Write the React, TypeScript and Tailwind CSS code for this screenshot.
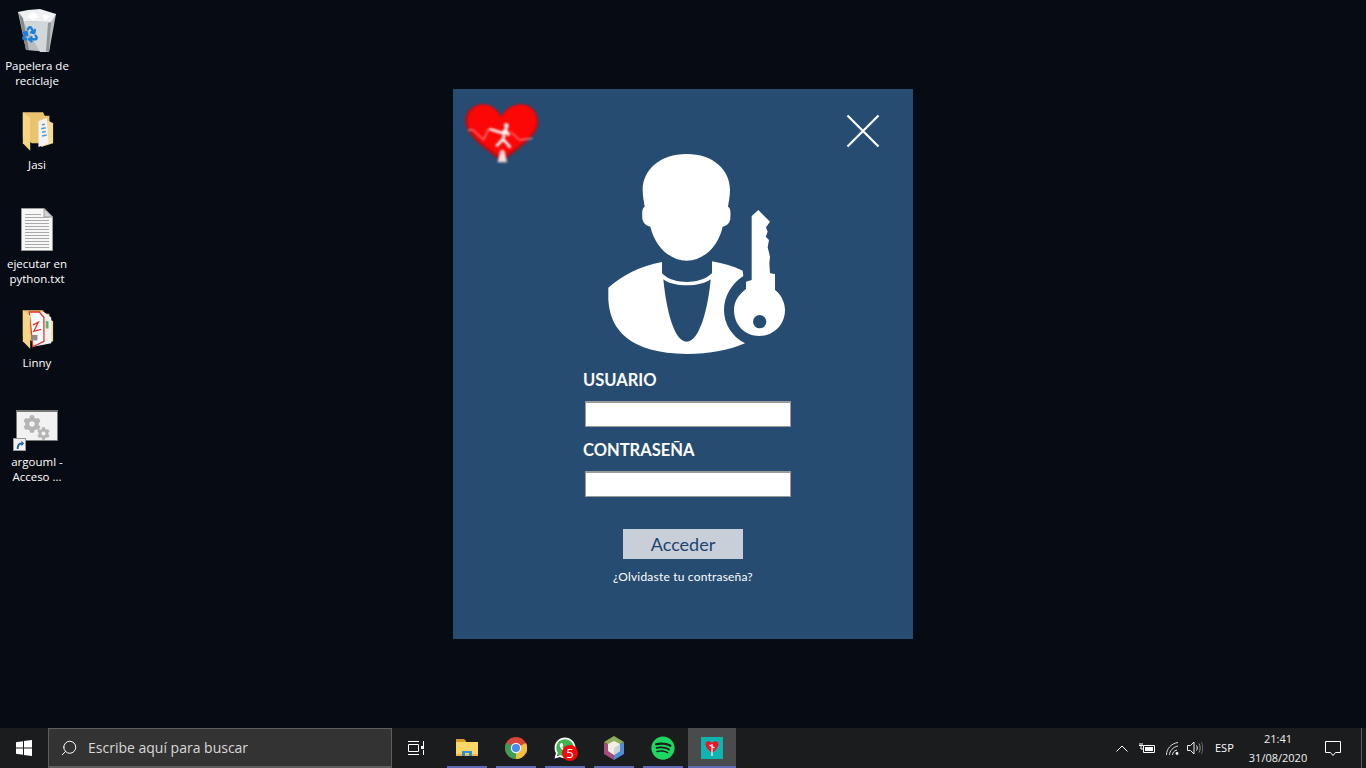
import { FaCog, FaSpotify, FaWhatsapp } from "react-icons/fa"
import { Recycle, Search } from "lucide-react"

const Bin = () => (
  <div className="relative w-[38px] h-[44px]">
    <svg width="38" height="44" viewBox="0 0 38 44">
      <path d="M0 3 L38 5 L31 43 L8 41 Z" fill="#b9bdbf" />
      <path d="M0 3 L10 1 L22 0 L38 5 L33 13 L5 12 Z" fill="#eef0f1" />
      <path d="M5 12 L33 13 L31 43 L22 43 Z" fill="#d4d7d9" />
      <path d="M1 4 L8 41 L11 41 L5 9 Z" fill="#84898c" />
      <path d="M9 7 L16 3 L21 8 L14 11 Z M24 5 L32 7 L27 12 Z" fill="#ffffff" />
      <path d="M30 14 L28 42 L31 43 L33 13 Z" fill="#8f9496" />
    </svg>
    <Recycle size={18} strokeWidth={3.2} className="absolute left-[3px] top-[16px] text-[#1b7fdb]" />
  </div>
)

const Folder = ({ pdf }: { pdf?: boolean }) => (
  <svg width="33" height="41" viewBox="0 0 36 44">
    <path d="M2 2 L24 2 L26 6 L31 6 L31 36 L12 36 L2 30 Z" fill="#e9c46f" />
    <path d="M31 12 L35 14 L35 36 L22 40 L22 12 Z" fill="#f8dc8f" />
    {pdf ? (
      <>
        <path d="M10 6 L25 4 L33 10 L33 38 L13 42 Z" fill="#f1f1f1" />
        <path d="M9 4 L20 4 L25 10 L25 36 L13 42 Z" fill="#fff" stroke="#e2342c" strokeWidth="1.4" />
        <path d="M13 18 L19 15 L14 25 L22 23" fill="none" stroke="#e2342c" strokeWidth="1.4" />
        <rect x="11" y="29" width="7" height="6" fill="#8d8d8d" />
        <rect x="27" y="14" width="3" height="8" fill="#5db075" />
      </>
    ) : (
      <>
        <path d="M19 12 L28 8 L30 36 L19 40 Z" fill="#f0f3f5" />
        <path d="M23 16 L26 15 M22 20 L27 19 M23 24 L27 23 M23 28 L28 27" stroke="#4d9bd5" strokeWidth="1.6" />
      </>
    )}
    <path d="M2 2 L10 8 L10 44 L2 36 Z" fill="#f6d684" />
  </svg>
)

const TextFile = () => (
  <svg width="32" height="43" viewBox="0 0 32 43">
    <path d="M.5 .5 L23 .5 L31.5 9 L31.5 42.5 L.5 42.5 Z" fill="#f7f7f7" stroke="#9a9a9a" />
    <path d="M23 .5 L23 9 L31.5 9 Z" fill="#d4d4d4" stroke="#9a9a9a" />
    {[6, 9, 12, 15, 18, 21, 24, 27, 30, 33, 36, 39].map((y) => (
      <path key={y} d={`M4 ${y + 0.5} L${y < 9 ? 20 : 28} ${y + 0.5}`} stroke="#a9a9a9" />
    ))}
  </svg>
)

const Shortcut = () => (
  <div className="relative w-[42px] h-[46px]">
    <div className="absolute left-0 top-[6px] w-[42px] h-[31px] bg-[#f2f2f2] border border-[#777] border-t-[2px]">
      <FaCog size={18} className="absolute left-[6px] top-[3px] text-[#b4b4b4]" />
      <FaCog size={13} className="absolute left-[20px] top-[15px] text-[#b4b4b4]" />
    </div>
    <div className="absolute left-[-3px] top-[34px] w-[13px] h-[13px] bg-[#f2f2f2] border border-[#999]">
      <svg viewBox="0 0 12 12" className="w-full h-full">
        <path d="M3 11 C3 6 5 4 8 4 L8 2 L11 5 L8 8 L8 6 C6 6 5 8 5 11 Z" fill="#1f5fae" />
      </svg>
    </div>
  </div>
)

const desktopItems = [
  { icon: <Bin />, label: ["Papelera de", "reciclaje"] },
  { icon: <Folder />, label: ["Jasi"] },
  { icon: <TextFile />, label: ["ejecutar en", "python.txt"] },
  { icon: <Folder pdf />, label: ["Linny"] },
  { icon: <Shortcut />, label: ["argouml -", "Acceso ..."] },
]

const HeartLogo = () => (
  <svg width="120" height="90" viewBox="0 0 360 270" className="absolute left-0 top-0 blur-[0.8px]">
    <path
      d="M147 218 C100 182 37 142 37 95 C37 65 62 45 90 45 C115 45 135 62 145 82 C155 62 175 45 205 45 C235 45 256 70 256 100 C256 142 195 182 147 218 Z"
      fill="#b40f16"
    />
    <path
      d="M147 208 C105 175 44 138 44 95 C44 65 68 47 92 47 C115 47 135 65 145 85 C155 65 175 47 205 47 C232 47 251 70 251 98 C251 136 190 175 147 208 Z"
      fill="#fd0606"
    />
    <path
      d="M45 124 L58 122 L92 152 L108 118 M172 128 L200 153 L238 148"
      fill="none"
      stroke="#f7c9c9"
      strokeWidth="3"
    />
    <circle cx="160" cy="110" r="7" fill="#fff" />
    <path d="M110 120 L148 132 L158 122 L150 150 L130 172 M150 150 L172 176 M158 122 L168 140" fill="none" stroke="#fff" strokeWidth="8" />
    <path d="M142 184 L154 184 L162 220 L134 220 Z" fill="#f8dcdc" />
  </svg>
)

const PersonKey = () => (
  <svg width="210" height="225" viewBox="0 0 630 675" className="block ml-[137px]">
    <path
      d="M290 42 C210 42 158 90 158 150 C158 170 162 185 164 200 C156 205 156 215 157 235 C158 250 170 258 181 260 C195 320 240 362 290 362 C340 362 385 320 398 260 C410 258 420 250 421 235 C422 215 422 205 414 200 C416 185 420 170 420 150 C420 90 370 42 290 42 Z"
      fill="#fff"
    />
    <path
      d="M216 366 C150 378 100 405 55 443 L55 480 C60 570 120 640 290 642 C360 642 420 630 465 610 C425 590 402 550 402 510 C402 470 425 430 460 408 L458 392 C430 378 400 370 366 364 L366 400 C345 420 315 426 290 426 C265 426 235 420 216 400 Z"
      fill="#fff"
    />
    <path d="M220 418 C250 442 330 442 362 418 C355 500 330 605 290 605 C250 605 228 500 220 418 Z" fill="#274c71" />
    <path
      d="M505 210 L485 228 L485 420 L468 425 L468 447 C445 465 432 485 432 510 C432 555 465 588 508 588 C550 588 585 555 585 510 C585 485 570 460 555 450 L555 402 L540 400 L538 370 L540 350 L533 322 L537 300 L527 290 L533 275 L528 262 L540 245 Z"
      fill="#fff"
    />
    <circle cx="509" cy="545" r="20" fill="#274c71" />
  </svg>
)

const ExplorerIcon = () => (
  <svg width="22" height="20" viewBox="0 0 22 20">
    <path d="M0 1 L8 1 L10 3 L10 6 L0 6 Z" fill="#d99c2b" />
    <path d="M0 4 L22 4 L22 18 L0 18 Z" fill="#fbd767" />
    <path d="M0 16 L22 16 L22 18 L0 18 Z" fill="#eeb73f" />
    <path d="M6 18 L6 13 L16 13 L16 18 L13 18 L13 15 L9 15 L9 18 Z" fill="#2f8fd6" />
  </svg>
)

const ChromeIcon = () => (
  <svg width="22" height="22" viewBox="0 0 22 22">
    <circle cx="11" cy="11" r="11" fill="#d9453a" />
    <path d="M11 11 L1.5 5.5 A11 11 0 0 0 11 22 Z" fill="#3c9f55" />
    <path d="M11 11 L21 6 A11 11 0 0 1 11 22 Z" fill="#f3c13a" />
    <circle cx="11" cy="11" r="5.2" fill="#f4f4f4" />
    <circle cx="11" cy="11" r="4" fill="#4a8af4" />
  </svg>
)

const WhatsappIcon = () => (
  <div className="relative w-6 h-6">
    <div className="absolute left-[2px] top-[2px] w-5 h-5 rounded-full bg-[#3fb34f]" />
    <FaWhatsapp size={24} className="absolute left-0 top-0 text-white" />
    <span className="absolute left-[9px] top-[9px] w-4 h-4 rounded-full bg-[#f10909] text-white text-[13px] leading-4 text-center">
      5
    </span>
  </div>
)

const NetbeansIcon = () => (
  <svg width="22" height="24" viewBox="0 0 22 24">
    <path d="M11 0 L21 6 L11 12 L1 6 Z" fill="#8fae5b" />
    <path d="M1 6 L11 12 L11 24 L1 18 Z" fill="#a64d79" />
    <path d="M21 6 L11 12 L11 24 L21 18 Z" fill="#4d8fd1" />
    <path d="M11 5 L17 8 L17 15 L11 19 L5 15 L5 8 Z" fill="#f4efe6" />
    <path d="M11 12 L17 8 L17 15 L11 19 Z" fill="#cfd3d6" />
  </svg>
)

const AppIcon = () => (
  <div className="w-[22px] h-[22px] bg-[#10b5b0] flex items-center justify-center">
    <svg width="16" height="18" viewBox="0 0 16 18">
      <path d="M8 14 C4 11 1.5 8 1.5 5 C1.5 2 5.5 1 8 4 C10.5 1 14.5 2 14.5 5 C14.5 8 12 11 8 14 Z" fill="#f01226" />
      <path d="M8 5 L8 17 M5.5 6 L10.5 9" stroke="#fff" strokeWidth="1.2" />
    </svg>
  </div>
)

const taskItems = [
  { icon: <ExplorerIcon />, active: false },
  { icon: <ChromeIcon />, active: false },
  { icon: <WhatsappIcon />, active: false },
  { icon: <NetbeansIcon />, active: false },
  { icon: <FaSpotify size={24} className="text-[#1ed760]" />, active: false },
  { icon: <AppIcon />, active: true },
]

const Taskbar = () => (
  <div className="h-10 shrink-0 bg-[#1b1c1e] flex items-stretch text-white font-['Open_Sans',sans-serif]">
    <div className="w-12 flex items-center justify-center">
      <svg width="16" height="16" viewBox="0 0 16 16" fill="#fff">
        <path d="M0 2.3 L7 1.3 L7 7.6 L0 7.6 Z M8 1.1 L16 0 L16 7.6 L8 7.6 Z M0 8.4 L7 8.4 L7 14.7 L0 13.7 Z M8 8.4 L16 8.4 L16 16 L8 14.9 Z" />
      </svg>
    </div>
    <div className="w-[344px] bg-[#333333] border border-[#5d5d5d] border-b-2 flex items-center pl-[11px] gap-[10px]">
      <Search size={18} strokeWidth={1.3} className="text-white -scale-x-100" />
      <span className="text-[14px] text-[#d8d8d8]">Escribe aquí para buscar</span>
    </div>
    <div className="w-[51px] pr-[3px] flex items-center justify-center">
      <svg width="16" height="14" viewBox="0 0 16 14" fill="none" stroke="#fff">
        <path d="M0 .5 H11 M0 13.5 H11 M.5 3.5 H10.5 V10.5 H.5 Z M15.5 0 V5 M15.5 9 V14" />
        <rect x="13" y="5" width="3" height="3" fill="#fff" stroke="none" />
      </svg>
    </div>
    <div className="flex gap-px">
      {taskItems.map((item, i) => (
        <div
          key={i}
          className={`relative w-12 flex items-center justify-center ${item.active ? "bg-[#4a4b4d]" : ""}`}
        >
          {item.icon}
          <div className={`absolute bottom-0 h-[2px] bg-[#5f6ab8] ${item.active ? "inset-x-0" : "inset-x-1"}`} />
        </div>
      ))}
    </div>
    <div className="flex-1" />
    <div className="flex items-center">
      <svg width="12" height="7" viewBox="0 0 12 7" className="mr-[11px]" fill="none" stroke="#fff">
        <path d="M.5 6.5 L6 1 L11.5 6.5" />
      </svg>
      <svg width="16" height="11" viewBox="0 0 16 11" className="mr-[11px]" fill="none" stroke="#fff">
        <path d="M4.5 2.5 H15.5 V9.5 H4.5 Z" />
        <rect x="6" y="4" width="8" height="4" fill="#fff" stroke="none" />
        <path d="M0 2.5 H4 M1 0 V2.5 M3 0 V2.5 M2 3 V6 H5" />
      </svg>
      <svg width="13" height="13" viewBox="0 0 13 13" className="mr-[8px]" fill="none" stroke="#ddd">
        <path d="M.5 13 C.5 7 5 1.5 12 .5 M3.5 13 C3.5 9 7 5 12 4 M6.5 13 C6.5 11 8 8.5 11 8" />
        <circle cx="11" cy="11.5" r="1.4" fill="#fff" stroke="none" />
      </svg>
      <svg width="16" height="14" viewBox="0 0 16 14" className="mr-[12px]" fill="none" stroke="#eee">
        <path d="M.5 4.5 H3.5 L7 1 V13 L3.5 9.5 H.5 Z" />
        <path d="M9.5 4.5 C10.5 6 10.5 8 9.5 9.5" />
        <path d="M12 2.5 C13.5 5 13.5 9 12 11.5" stroke="#999" />
        <path d="M14.5 1 C16 4.5 16 9.5 14.5 13" stroke="#666" />
      </svg>
      <span className="text-[11px] w-[20px] mr-[10px]">ESP</span>
      <div className="w-[66px] text-center text-[11px] leading-[19px] text-[#f0f0f0]">
        <div>21:41</div>
        <div>31/08/2020</div>
      </div>
      <div className="w-[44px] mr-[6px] flex items-center justify-center">
        <svg width="16" height="15" viewBox="0 0 16 15" fill="none" stroke="#fff">
          <path d="M.5 .5 H15.5 V11.5 H10.5 L8 14.5 L5.5 11.5 H.5 Z" />
        </svg>
      </div>
      <div className="w-px h-full bg-[#5a5a5a]" />
      <div className="w-1" />
    </div>
  </div>
)

const App = () => {
  return (
    <div className="h-screen w-full overflow-hidden flex flex-col bg-[#070c14]">
      <div className="relative flex-1 flex items-center justify-center">
        <div className="absolute left-0 top-2 w-[74px] flex flex-col text-white text-[11.5px] leading-[15px] font-['Open_Sans',sans-serif]">
          {desktopItems.map((item) => (
            <div key={item.label[0]} className="h-[99px] flex flex-col items-center">
              <div className="h-[46px] flex items-center justify-center mb-[4px]">{item.icon}</div>
              {item.label.map((line) => (
                <div key={line}>{line}</div>
              ))}
            </div>
          ))}
        </div>

        <div className="relative w-[460px] h-[550px] bg-[#274c71] pt-[51px] text-white font-['Lato',sans-serif]">
          <HeartLogo />
          <svg width="34" height="34" viewBox="0 0 34 34" className="absolute left-[393px] top-[25px]">
            <path d="M1.5 1.5 L32.5 32.5 M32.5 1.5 L1.5 32.5" stroke="#fff" strokeWidth="2.2" />
          </svg>
          <PersonKey />
          <div className="ml-[130px] w-[210px]">
            <div className="h-[36px] text-[16.5px] font-bold leading-[30px]">USUARIO</div>
            <input className="block ml-[2px] w-[206px] h-[26px] bg-white border border-[#9a9a9a] border-t-2" />
            <div className="mt-[8px] h-[36px] text-[16.5px] font-bold leading-[30px]">CONTRASEÑA</div>
            <input className="block ml-[2px] w-[206px] h-[26px] bg-white border border-[#9a9a9a] border-t-2" />
          </div>
          <button className="block mx-auto mt-[32px] w-[120px] h-[30px] bg-[#c9cfd8] text-[#1c4470] text-[18px]">
            Acceder
          </button>
          <div className="mt-[9px] text-center text-[12px] leading-[18px] tracking-[0.2px]">¿Olvidaste tu contraseña?</div>
        </div>
      </div>
      <Taskbar />
    </div>
  )
}

export default App
